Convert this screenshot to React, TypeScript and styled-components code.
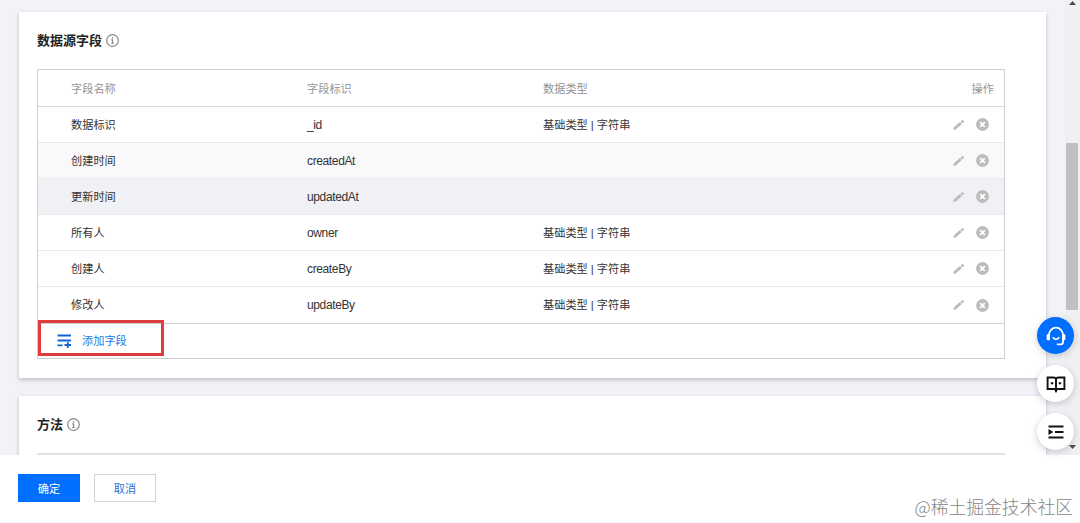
import React from "react";
import styled, { createGlobalStyle } from "styled-components";

const GlobalStyle = createGlobalStyle`
  * { box-sizing: border-box; }
  body {
    margin: 0;
    overflow: hidden;
    background: #fff;
    color: #333;
    font-family: "Liberation Sans", "Noto Sans CJK SC", sans-serif;
    font-size: 11.2px;
  }
`;

const Page = styled.div`
  position: relative;
  display: flex;
  flex-direction: column;
  height: 523px;
  width: 1080px;
`;

const Viewport = styled.div`
  display: flex;
  height: 455px;
  overflow: hidden;
  background: #f2f3f7;
`;

const Content = styled.main`
  flex: 1;
  display: flex;
  flex-direction: column;
  gap: 18px;
  padding: 12px 19px 0 19px;
`;

const Card = styled.section<{ $height: number }>`
  flex: none;
  height: ${(p) => p.$height}px;
  padding: 0 41px 0 18px;
  background: #fff;
  box-shadow: 0 2px 4px rgba(54, 58, 80, 0.28);
`;

const CardTitle = styled.h2`
  display: flex;
  align-items: center;
  gap: 4px;
  height: 57px;
  margin: 0;
  font-size: 13px;
  font-weight: 700;
  color: #222;
`;

const TitleText = styled.span`
  padding-bottom: 2px;
`;

const Table = styled.div`
  border: 1px solid #cfcfd1;
`;

const rowTone = { plain: "#fff", soft: "#f9f9fb", strong: "#f0f1f5" };

const Row = styled.div<{ $tone?: keyof typeof rowTone; $last?: boolean }>`
  display: grid;
  grid-template-columns: 236px 236px 1fr auto;
  align-items: center;
  height: 36.1px;
  padding: 0 15px 0 33px;
  background: ${(p) => rowTone[p.$tone ?? "plain"]};
  border-bottom: 1px solid ${(p) => (p.$last ? "#cfcfd1" : "#e9eaec")};
`;

const HeaderRow = styled(Row)`
  height: 37px;
  padding-right: 10px;
  color: #949494;
  border-bottom: 1px solid #d9d9db;
`;

const Label = styled.span`
  padding-bottom: 2px;
`;

const Ident = styled.span`
  font-size: 12px;
  letter-spacing: -0.37px;
`;

const Actions = styled.span`
  display: flex;
  align-items: center;
  gap: 11px;
`;

const TableFooter = styled.div`
  display: flex;
  align-items: flex-start;
  height: 34px;
`;

const AddField = styled.button`
  display: flex;
  align-items: center;
  gap: 10px;
  width: 126px;
  height: 36px;
  margin: -4px 0 0 0;
  padding: 7px 0 0 16px;
  border: 3px solid #df3c40;
  background: transparent;
  color: #1a7ddc;
  font: inherit;
`;

const Divider = styled.div`
  height: 2px;
  background: #dfe0e1;
`;

const Scrollbar = styled.div`
  display: flex;
  flex-direction: column;
  justify-content: space-between;
  align-items: center;
  width: 15px;
  padding: 1px 1px 6px 0;
  background: #f0f0f1;
`;

const Thumb = styled.div`
  width: 12px;
  height: 167px;
  margin: 137px 0 134px;
  background: #c0c0c1;
`;

const Footer = styled.footer`
  display: flex;
  gap: 14px;
  padding: 19px 18px 0;
`;

const Button = styled.button<{ $primary?: boolean }>`
  width: 62px;
  height: 28px;
  padding: 0;
  border: 1px solid ${(p) => (p.$primary ? "#006eff" : "#d2d3d6")};
  background: ${(p) => (p.$primary ? "#006eff" : "#fff")};
  color: ${(p) => (p.$primary ? "#fff" : "#2c6fd0")};
  font: inherit;
`;

const FloatingTools = styled.div`
  position: absolute;
  top: 317px;
  left: 1037px;
  display: flex;
  flex-direction: column;
  gap: 11px;
`;

const ToolButton = styled.div<{ $active?: boolean }>`
  display: flex;
  align-items: center;
  justify-content: center;
  width: 37px;
  height: 37px;
  border-radius: 50%;
  color: ${(p) => (p.$active ? "#fff" : "#111")};
  background: ${(p) => (p.$active ? "#006eff" : "#fff")};
  box-shadow: 0 2px 7px rgba(54, 58, 80, 0.25);
`;

const Watermark = styled.div`
  position: absolute;
  right: 7px;
  bottom: 6px;
  color: #858585;
  font-family: "Noto Sans CJK SC", sans-serif;
  font-weight: 300;
  font-size: 17.8px;
  line-height: 22px;
  white-space: nowrap;
`;

const InfoIcon = () => (
  <svg width="13" height="13" viewBox="0 0 13 13" fill="none" stroke="#888">
    <circle cx="6.5" cy="6.5" r="5.8" strokeWidth="1.2" />
    <path d="M6.5 3v1.500M5.200 5.800h1.300v3.600M5.200 9.500h2.600" strokeWidth="1.200" />
  </svg>
);

const PencilIcon = () => (
  <svg width="13" height="12" viewBox="0 0 13 12" fill="#bababb">
    <path d="M1.3 11 1.800 8.500 7.900 3l1.900 2.100-6 5.400zM8.500 2.500 10 1.200q.5-.4 1 0l.9.9q.4.5-.1.9l-1.400 1.400z" />
  </svg>
);

const RemoveIcon = () => (
  <svg width="13" height="13" viewBox="0 0 13 13">
    <circle cx="6.5" cy="6.5" r="6.4" fill="#bcbcbd" />
    <path d="m4.2 4.2 4.600 4.600m0-4.600L4.200 8.800" stroke="#fff" strokeWidth="1.900" />
  </svg>
);

const AddRowIcon = () => (
  <svg width="15" height="14" viewBox="0 0 15 14" fill="none" stroke="#1263cf" strokeWidth="1.8">
    <path d="M.5 1.5h13.500M.5 6.5h13.500M.5 11.300h5M7.500 11h6.500M10.800 8v6" />
  </svg>
);

const HeadsetIcon = () => (
  <svg width="20" height="20" viewBox="0 0 20 20" fill="none" stroke="currentColor" strokeWidth="1.8">
    <path d="M3 9a7 7.400 0 0 1 14 0" />
    <path d="M.6 9.500Q.6 8 2 8h2v6.300H2Q.6 14.300.6 12.800zM16 8h2q1.400 0 1.400 1.500v3.300q0 1.500-1.400 1.500h-2z" fill="currentColor" stroke="none" />
    <path d="M6.700 11.300q3.300 4 6.600 0M17 13.500v2.500q0 2.300-2.300 2.300H10.800" />
  </svg>
);

const BookIcon = () => (
  <svg width="20" height="18" viewBox="0 0 20 18" fill="none" stroke="currentColor" strokeWidth="1.9">
    <path d="M10 4Q9.500 2.500 7.500 2.500H1.600v11.500H8q1.500 0 2 1.500.5-1.500 2-1.500h6.400V2.500h-5.900Q10.500 2.500 10 4zM10 4v13" />
    <path d="M4.800 8.200h2.400M12.800 8.200h2.400" />
  </svg>
);

const ListIcon = () => (
  <svg width="16" height="14" viewBox="0 0 16 14" stroke="currentColor" strokeWidth="1.800">
    <path d="M.5 1.500h15M7 7h8.500M.5 12.500h15" />
    <path d="M.5 4 5.300 7 .5 10z" fill="currentColor" stroke="none" />
  </svg>
);

const ScrollArrow = ({ down }: { down?: boolean }) => (
  <svg width="7" height="4" viewBox="0 0 7 4" fill="#4b4b4b">
    <path d={down ? "M0 0h7L3.500 4z" : "M0 4h7L3.500 0z"} />
  </svg>
);

type Field = { name: string; id: string; type?: string; tone?: keyof typeof rowTone };

const TEXT_TYPE = "基础类型 | 字符串";

const fields: Field[] = [
  { name: "数据标识", id: "_id", type: TEXT_TYPE },
  { name: "创建时间", id: "createdAt", tone: "soft" },
  { name: "更新时间", id: "updatedAt", tone: "strong" },
  { name: "所有人", id: "owner", type: TEXT_TYPE },
  { name: "创建人", id: "createBy", type: TEXT_TYPE },
  { name: "修改人", id: "updateBy", type: TEXT_TYPE },
];

export default function App() {
  return (
    <Page>
      <GlobalStyle />
      <Viewport>
        <Content>
          <Card $height={366}>
            <CardTitle>
              <TitleText>数据源字段</TitleText>
              <InfoIcon />
            </CardTitle>
            <Table>
              <HeaderRow>
                <span>字段名称</span>
                <span>字段标识</span>
                <span>数据类型</span>
                <span>操作</span>
              </HeaderRow>
              {fields.map((f, i) => (
                <Row key={f.id} $tone={f.tone} $last={i === fields.length - 1}>
                  <Label>{f.name}</Label>
                  <Ident>{f.id}</Ident>
                  <Label>{f.type}</Label>
                  <Actions>
                    <PencilIcon />
                    <RemoveIcon />
                  </Actions>
                </Row>
              ))}
              <TableFooter>
                <AddField>
                  <AddRowIcon />
                  <Label>添加字段</Label>
                </AddField>
              </TableFooter>
            </Table>
          </Card>
          <Card $height={120}>
            <CardTitle>
              <TitleText>方法</TitleText>
              <InfoIcon />
            </CardTitle>
            <Divider />
          </Card>
        </Content>
        <Scrollbar>
          <ScrollArrow />
          <Thumb />
          <ScrollArrow down />
        </Scrollbar>
      </Viewport>
      <Footer>
        <Button $primary>确定</Button>
        <Button>取消</Button>
      </Footer>
      <FloatingTools>
        <ToolButton $active>
          <HeadsetIcon />
        </ToolButton>
        <ToolButton>
          <BookIcon />
        </ToolButton>
        <ToolButton>
          <ListIcon />
        </ToolButton>
      </FloatingTools>
      <Watermark>@稀土掘金技术社区</Watermark>
    </Page>
  );
}
